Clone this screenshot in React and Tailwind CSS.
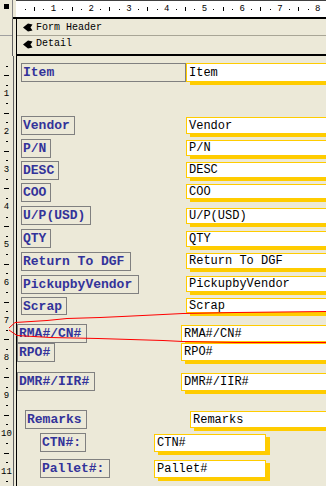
import React from "react";

const labels = [
  ["Item", 21, 61, 165, 19],
  ["Vendor", 21, 114, 54, 19],
  ["P/N", 21, 137, 30, 19],
  ["DESC", 21, 159, 38, 19],
  ["COO", 21, 181, 30, 19],
  ["U/P(USD)", 21, 204, 70, 19],
  ["QTY", 21, 227, 30, 19],
  ["Return To DGF", 21, 250, 110, 19],
  ["PickupbyVendor", 21, 273, 118, 19],
  ["Scrap", 21, 295, 46, 18],
  ["RMA#/CN#", 17, 322, 70, 19],
  ["RPO#", 17, 341, 38, 19],
  ["DMR#/IIR#", 17, 370, 78, 19],
  ["Remarks", 25, 408, 62, 19],
  ["CTN#:", 40, 431, 46, 19],
  ["Pallet#:", 40, 457, 70, 19],
];

const boxes = [
  ["Item", 186, 61, 160, 19],
  ["Vendor", 186, 115, 160, 17],
  ["P/N", 186, 138, 160, 16],
  ["DESC", 186, 160, 160, 16],
  ["COO", 186, 182, 160, 15],
  ["U/P(USD)", 186, 206, 160, 16],
  ["QTY", 186, 229, 160, 16],
  ["Return To DGF", 186, 251, 160, 16],
  ["PickupbyVendor", 186, 274, 160, 16],
  ["Scrap", 186, 296, 160, 15],
  ["RMA#/CN#", 181, 323, 160, 17],
  ["RPO#", 181, 341, 160, 18],
  ["DMR#/IIR#", 181, 371, 160, 18],
  ["Remarks", 190, 409, 160, 17],
  ["CTN#", 154, 432, 112, 18],
  ["Pallet#", 154, 458, 112, 18],
];

const OX = 17;
const OY = 54;

function SectionIcon() {
  return (
    <svg width="10" height="9" viewBox="0 0 10 9" className="shrink-0">
      <path d="M0 4.5 L5 0.5 L9.5 1.5 L7.5 4.5 L9.5 7.5 L5 8.5 Z" fill="#000" />
    </svg>
  );
}

function TopRuler() {
  const cells = [];
  for (let i = 1; i <= 34; i++) {
    const k = i % 4;
    let c;
    if (k === 0) c = <span className="text-[9px] leading-none text-black">{i / 4}</span>;
    else if (k === 2) c = <span className="w-px h-[4px] bg-black" />;
    else c = <span className="w-px h-px bg-black" />;
    cells.push(
      <div key={i} className="shrink-0 w-[9.45px] flex items-center justify-center">
        {c}
      </div>
    );
  }
  return (
    <div className="flex-1 h-full bg-white border-t border-[#404040] flex overflow-hidden">
      <div className="shrink-0 w-[4.3px]" />
      {cells}
    </div>
  );
}

function LeftRuler() {
  const cells = [];
  for (let i = 1; i <= 45; i++) {
    const k = i % 4;
    let c;
    if (k === 0) c = <span className="text-[9px] leading-none text-black">{i / 4}</span>;
    else if (k === 2) c = <span className="w-[5px] h-px bg-black" />;
    else c = <span className="w-[2px] h-px bg-black" />;
    cells.push(
      <div key={i} className="shrink-0 h-[9.45px] flex items-center justify-center">
        {c}
      </div>
    );
  }
  return (
    <div className="w-[13px] shrink-0 flex flex-col overflow-hidden">
      <div className="shrink-0 h-[5.5px]" />
      {cells}
    </div>
  );
}

export default function App() {
  return (
    <div className="w-[326px] h-[486px] bg-[#ece9d8] overflow-hidden relative flex flex-col font-['Liberation_Mono',monospace]">
      <div className="flex h-[17px] shrink-0">
        <div className="w-[13px] shrink-0 border-r border-[#808080] flex items-start pl-[4px] pt-[4px]">
          <div className="w-[5px] h-[5px] bg-black" />
        </div>
        <div className="w-[3px] shrink-0" />
        <TopRuler />
      </div>
      <div className="flex h-[2px] shrink-0">
        <div className="w-[13px] shrink-0 border-r border-[#808080]" />
        <div className="flex-1 bg-black" />
      </div>
      <div className="flex h-[35px] shrink-0">
        <div className="w-[13px] shrink-0 border-r border-[#606060] flex flex-col">
          <div className="h-[17px] border-b border-[#a0a0a0]" />
          <div className="flex-1" />
        </div>
        <div className="w-[3px] shrink-0" />
        <div className="w-px bg-black shrink-0" />
        <div className="flex-1 flex flex-col">
          <div className="h-px" />
          <div className="h-[16px] border-b border-[#a8a596] flex items-center gap-[3px] pl-[6px]">
            <SectionIcon />
            <span className="text-[10px] leading-none text-black">Form Header</span>
          </div>
          <div className="h-[16px] flex items-center gap-[3px] pl-[6px]">
            <SectionIcon />
            <span className="text-[10px] leading-none text-black">Detail</span>
          </div>
        </div>
      </div>
      <div className="flex h-[2px] shrink-0">
        <div className="w-[13px] shrink-0 border-r border-[#606060]" />
        <div className="w-[3px] shrink-0" />
        <div className="flex-1 bg-black" />
      </div>
      <div className="flex flex-1 min-h-0">
        <LeftRuler />
        <div className="w-px bg-[#606060] shrink-0" />
        <div className="w-[2px] shrink-0" />
        <div className="w-px bg-black shrink-0" />
        <div className="flex-1 relative">
          {boxes.map(([t, x, y, w, h]) => (
            <div
              key={"b" + t}
              className="absolute bg-white border border-[#ffcc00] shadow-[4px_3px_0_0_#ffcc00] flex items-center pl-[2px] text-[12px] leading-none text-black whitespace-nowrap overflow-hidden"
              style={{ left: x - OX, top: y - OY, width: w, height: h }}
            >
              {t}
            </div>
          ))}
          {labels.map(([t, x, y, w, h]) => (
            <div
              key={"l" + t}
              className="absolute border border-[#808080] flex items-center pl-[1px] text-[13px] font-bold leading-none text-[#33339a] whitespace-nowrap"
              style={{ left: x - OX, top: y - OY, width: w, height: h }}
            >
              {t}
            </div>
          ))}
        </div>
      </div>
      <svg className="absolute inset-0 pointer-events-none" width="326" height="486" viewBox="0 0 326 486">
        <polyline
          points="9,328 15,322.5 47,320.5 67,318.5 100,317.5 122,316.5 163,314.5 183,313.5 236,312.5 326,311.5"
          fill="none"
          stroke="#ff0000"
          strokeWidth="1"
        />
        <polyline
          points="9,330 17,335.5 50,337.5 98,338.5 163,340.5 183,341.5 236,342.5 326,342.5"
          fill="none"
          stroke="#ff0000"
          strokeWidth="1"
        />
      </svg>
    </div>
  );
}
